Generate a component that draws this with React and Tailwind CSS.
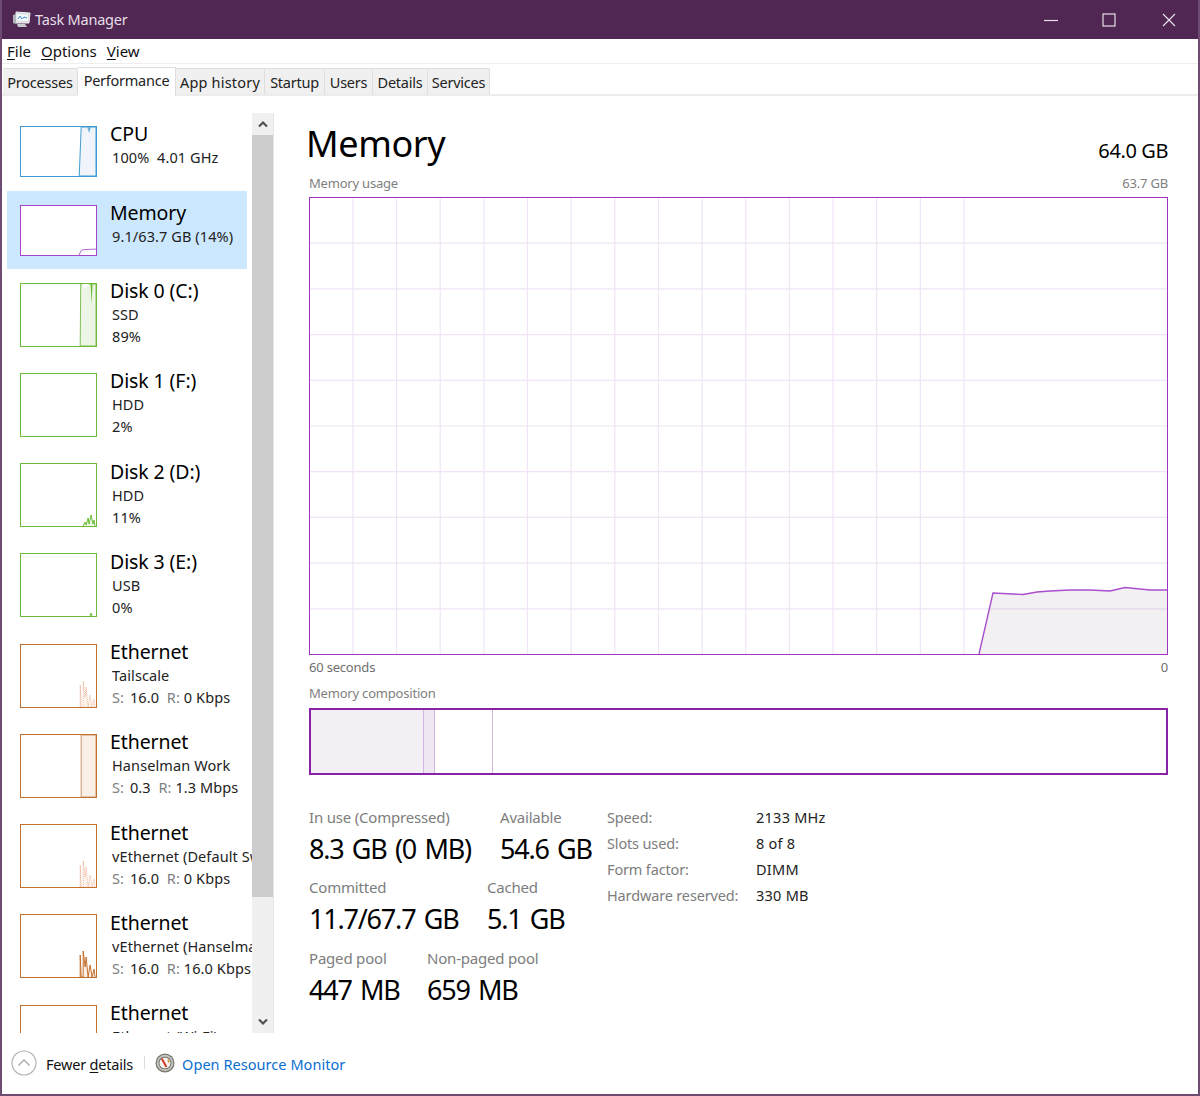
import React from 'react'

const theme = {
  cpu: { border: 'border-[#3f9bd1]', line: '#3f9bd1', fill: '#eff5fb' },
  mem: { border: 'border-[#a544c6]', line: '#b06ad0', fill: '#ffffff' },
  disk: { border: 'border-[#6dbb35]', line: '#6dbb35', fill: '#edf5e7' },
  net: { border: 'border-[#c4702d]', line: '#c4702d', fill: '#fbf0e8' },
}

const tabs = [
  { name: 'Processes', w: 'w-[75px]', track: 'tracking-[-0.2px]' },
  { name: 'Performance', w: 'w-[98px]', track: 'tracking-[-0.25px]', active: true },
  { name: 'App history', w: 'w-[89px]', track: 'tracking-[0.2px]' },
  { name: 'Startup', w: 'w-[60px]', track: 'tracking-[-0.25px]' },
  { name: 'Users', w: 'w-[48px]', track: 'tracking-[-0.25px]' },
  { name: 'Details', w: 'w-[55px]', track: 'tracking-[-0.25px]' },
  { name: 'Services', w: 'w-[62px]', track: 'tracking-[-0.25px]' },
]

const spikes = 'M60 62 L60 40 L61 62 L63 62 L63 36 L65 52 L66 42 L68 62 L70 50 L72 62 L74 54 L75 62'

const items = [
  {
    title: 'CPU', lines: [<span>100%&nbsp; 4.01 GHz</span>], kind: 'cpu', h: 'h-[79px]', gh: 'h-[51px]', vb: 50,
    draw: (t) => (
      <>
        <path d="M59 50 L61 0 L76 0 L76 50 Z" fill={t.fill} stroke={t.line} strokeWidth="1" />
        <path d="M67 0 L69 6 L71 0 Z" fill="#6fb2dc" />
      </>
    ),
  },
  {
    title: 'Memory', lines: [<span>9.1/63.7 GB (14%)</span>], kind: 'mem', h: 'h-[78px]', gh: 'h-[51px]', vb: 50, selected: true,
    draw: (t) => <path d="M59 50 L60.5 46 L63 44.5 L76 44" fill="#fbf8fc" stroke={t.line} strokeWidth="1" />,
  },
  {
    title: 'Disk 0 (C:)', lines: [<span>SSD</span>, <span>89%</span>], kind: 'disk',
    draw: (t) => (
      <>
        <path d="M60 62 L60.5 0 L76 0 L76 62 Z" fill={t.fill} stroke="#7fbf55" strokeWidth="1" />
        <path d="M62 0 L65 5 L69 0 Z" fill="#ffffff" />
        <path d="M70.5 0 L71.5 20 L72.5 0 Z" fill="#6dbb35" />
      </>
    ),
  },
  { title: 'Disk 1 (F:)', lines: [<span>HDD</span>, <span>2%</span>], kind: 'disk', draw: () => null },
  {
    title: 'Disk 2 (D:)', lines: [<span>HDD</span>, <span>11%</span>], kind: 'disk',
    draw: (t) => <path d="M63 62 L65 58 L66 61 L68 54 L69 60 L71 51 L73 60 L74 56 L75 62" fill={t.fill} stroke={t.line} strokeWidth="1" />,
  },
  {
    title: 'Disk 3 (E:)', lines: [<span>USB</span>, <span>0%</span>], kind: 'disk',
    draw: (t) => <path d="M70 62 L71 59 L72 62" fill={t.fill} stroke={t.line} strokeWidth="1" />,
  },
  {
    title: 'Ethernet', lines: [<span>Tailscale</span>, <Rate s="16.0" r="0 Kbps" />], kind: 'net',
    draw: () => <path d={spikes} fill="#fdf4ee" stroke="#eeb69c" strokeWidth="1" strokeDasharray="1 1" />,
  },
  {
    title: 'Ethernet', lines: [<span>Hanselman Work</span>, <Rate s="0.3" r="1.3 Mbps" />], kind: 'net',
    draw: (t) => <path d="M61 62 L61 0 L76 0 L76 62 Z" fill={t.fill} stroke="#cf9468" strokeWidth="1" />,
  },
  {
    title: 'Ethernet', lines: [<span>vEthernet (Default Switch)</span>, <Rate s="16.0" r="0 Kbps" />], kind: 'net',
    draw: () => <path d={spikes} fill="#fdf4ee" stroke="#eeb69c" strokeWidth="1" strokeDasharray="1 1" />,
  },
  {
    title: 'Ethernet', lines: [<span>vEthernet (Hanselman)</span>, <Rate s="16.0" r="16.0 Kbps" />], kind: 'net',
    draw: (t) => <path d={spikes} fill={t.fill} stroke={t.line} strokeWidth="1" />,
  },
  {
    title: 'Ethernet', lines: [<span>Ethernet (Wi-Fi)</span>, <Rate s="16.0" r="0 Kbps" />], kind: 'net', draw: () => null,
  },
]

function Rate({ s, r }) {
  return (
    <span>
      <span className="text-[#808080]">S:</span> <span className="ml-[2px]">{s}</span>&nbsp; <span className="text-[#808080]">R:</span> {r}
    </span>
  )
}

const Under = ({ children }) => <span className="underline underline-offset-2 decoration-1">{children}</span>

function SideItem({ item }) {
  const t = theme[item.kind]
  const vbH = item.vb || 62
  return (
    <div className={`flex pl-[13px] pt-[13.6px] w-[240px] shrink-0 ${item.h || 'h-[90.25px]'} ${item.selected ? 'bg-[#cce8ff]' : ''}`}>
      <div className={`w-[77px] shrink-0 border bg-white ${t.border} ${item.gh || 'h-[64px]'}`}>
        <svg viewBox={`0 0 76 ${vbH}`} preserveAspectRatio="none" className="block w-full h-full">
          {item.draw(t)}
        </svg>
      </div>
      <div className="ml-[13px] -mt-[3.6px] whitespace-nowrap">
        <div className="text-[19.5px] leading-[24px] tracking-[-0.1px] text-black">{item.title}</div>
        <div className="pl-[2px] text-[14.5px] leading-[22px] tracking-[0.1px] text-[#222]">
          {item.lines.map((l, i) => <div key={i}>{l}</div>)}
        </div>
      </div>
    </div>
  )
}

function UsageChart() {
  const hLines = Array.from({ length: 9 }, (_, i) => 45.7 * (i + 1) - 0.5)
  const vLines = Array.from({ length: 19 }, (_, i) => 654 - i * 43.65)
  return (
    <div className="h-[458px] border border-[#9d35c2] bg-white">
      <svg viewBox="0 0 857 456" className="block w-full h-full">
        {hLines.map((y) => <line key={y} x1="0" x2="857" y1={y} y2={y} stroke="#f0e4f6" strokeWidth="1.2" />)}
        {vLines.map((x) => <line key={x} x1={x} x2={x} y1="0" y2="456" stroke="#f0e4f6" strokeWidth="1.2" />)}
        <path
          d="M669 456 L683 395 L713 396.5 L727 394 L740 393 L760 392 L780 392 L800 393 L815 389.5 L830 391 L840 392 L857 392 L857 456 Z"
          fill="#4b2d5a"
          fillOpacity="0.07"
        />
        <path
          d="M669 456 L683 395 L713 396.5 L727 394 L740 393 L760 392 L780 392 L800 393 L815 389.5 L830 391 L840 392 L857 392"
          fill="none"
          stroke="#a94fcb"
          strokeWidth="1.4"
        />
      </svg>
    </div>
  )
}

function Stat({ label, value, gap }) {
  return (
    <div className={gap}>
      <div className="text-[15px] leading-[20px] tracking-[-0.2px] text-[#7d7d7d]">{label}</div>
      <div className="mt-[4px] text-[27px] leading-[36px] tracking-[-1.2px] [word-spacing:2.5px] text-black">{value}</div>
    </div>
  )
}

function TaskIcon() {
  return (
    <svg width="19" height="17" viewBox="0 0 19 17" className="shrink-0">
      <path d="M4 1 L18 2 L17 12 L4 12 Z" fill="#d8dce0" stroke="#eef0f2" />
      <path d="M5 3 L16 3.5 L16 10 L5 10 Z" fill="#f4f7fa" />
      <path d="M6 8 L8 5 L10 8 L12 6 L15 7" fill="none" stroke="#3f8fd0" strokeWidth="1" />
      <path d="M1 4 L4 3 L4 13 L1 12 Z" fill="#aeb4ba" />
      <path d="M5 13 L13 13 L15 16 L6 16 Z" fill="#c8ccd0" />
    </svg>
  )
}

function MonitorIcon() {
  return (
    <svg width="20" height="20" viewBox="0 0 20 20" className="shrink-0">
      <circle cx="10" cy="10" r="9.5" fill="#77776f" />
      <circle cx="10" cy="10" r="8.3" fill="#c4c4be" />
      <circle cx="10" cy="10" r="6.3" fill="#55534e" />
      <circle cx="10" cy="10" r="5.6" fill="#f6f3ec" />
      <path d="M6.8 5.8 L11.5 14" stroke="#d23b2e" strokeWidth="2" />
      <path d="M13 6.5 L14 9.5" stroke="#d98a2b" strokeWidth="1.4" />
    </svg>
  )
}

export default function App() {
  return (
    <div className="w-[1200px] h-[1096px] overflow-hidden bg-white border-2 border-t-0 border-[#6e4c72] font-['Noto_Sans','Open_Sans',sans-serif] flex flex-col">
      <div className="h-[39px] shrink-0 bg-[#4f2752] flex items-center pl-[10px] text-white">
        <TaskIcon />
        <span className="ml-[4px] text-[14.5px] tracking-[-0.2px] text-[#e6dfe8]">Task Manager</span>
        <div className="ml-auto flex items-center">
          <svg width="16" height="16" viewBox="0 0 16 16" className="mr-[43px] text-[#e8e0ea]"><path d="M1 8.5 H15" stroke="currentColor" strokeWidth="1.2" /></svg>
          <svg width="14" height="14" viewBox="0 0 14 14" className="mr-[46px] text-[#e8e0ea]"><rect x="1" y="1" width="12" height="12" fill="none" stroke="currentColor" strokeWidth="1.2" /></svg>
          <svg width="14" height="14" viewBox="0 0 14 14" className="mr-[22px] text-[#e8e0ea]"><path d="M1 1 L13 13 M13 1 L1 13" stroke="currentColor" strokeWidth="1.2" /></svg>
        </div>
      </div>

      <div className="h-[25px] shrink-0 flex items-center gap-[10px] pl-[5px] border-b border-[#eeeeee] text-[15px] text-[#111]">
        <span><Under>F</Under>ile</span>
        <span><Under>O</Under>ptions</span>
        <span><Under>V</Under>iew</span>
      </div>

      <div className="h-[32px] shrink-0 flex items-end pl-[1px] border-b-2 border-[#ececec]">
        {tabs.map((tab) => (
          <div
            key={tab.name}
            className={`${tab.w} ${tab.track} flex justify-center border-r border-t border-[#dedede] text-[#222] text-[14.5px] ${tab.active ? 'h-[29px] bg-white pt-[2px] -mb-[2px] pb-[2px]' : 'h-[26px] bg-[#f0f0f0] items-center pt-[2px]'}`}
          >
            {tab.name}
          </div>
        ))}
      </div>

      <div className="flex flex-1 min-h-0">
        <div className="shrink-0 pt-[16px] pl-[5px] flex">
          <div className="w-[245px] h-[921px] overflow-hidden flex flex-col">
            {items.map((item, i) => <SideItem key={i} item={item} />)}
          </div>
          <div className="w-[22px] h-[920px] mt-px flex flex-col border-r border-[#e6e6e6] bg-[#f0f0f0]">
            <div className="h-[22px] flex items-center justify-center">
              <svg width="12" height="8" viewBox="0 0 12 8"><path d="M2 6.5 L6 2.5 L10 6.5" fill="none" stroke="#505050" strokeWidth="2.2" /></svg>
            </div>
            <div className="h-[762px] bg-[#cdcdcd]" />
            <div className="mt-auto h-[22px] flex items-center justify-center">
              <svg width="12" height="8" viewBox="0 0 12 8"><path d="M2 1.5 L6 5.5 L10 1.5" fill="none" stroke="#505050" strokeWidth="2.2" /></svg>
            </div>
          </div>
        </div>

        <div className="ml-[35px] w-[859px] shrink-0">
          <div className="flex justify-between h-[72px] pt-[20px]">
            <div className="text-[36px] leading-[56px] -ml-[3px] tracking-[-0.4px] text-black">Memory</div>
            <div className="text-[20px] leading-[28px] mt-[21px] tracking-[-0.4px] text-black">64.0 GB</div>
          </div>
          <div className="flex justify-between h-[29px] pt-[2px] items-center text-[13px] tracking-[-0.2px] text-[#808080]">
            <span>Memory usage</span>
            <span>63.7 GB</span>
          </div>
          <UsageChart />
          <div className="flex justify-between h-[25px] items-center text-[13px] tracking-[-0.2px] text-[#6f6f6f]">
            <span>60 seconds</span>
            <span>0</span>
          </div>
          <div className="h-[27px] flex items-center text-[13px] tracking-[-0.2px] text-[#808080]">Memory composition</div>
          <div className="h-[67px] border-2 border-[#8a22a8] flex mt-px">
            <div className="w-[112px] bg-[#f3f0f5]" />
            <div className="w-[12px] bg-[#efe8f3] border-x border-[#d3b6df]" />
            <div className="w-[58px] border-r border-[#d3b6df]" />
          </div>

          <div className="flex mt-[32px]">
            <div className="w-[298px]">
              <div className="flex">
                <Stat label="In use (Compressed)" value="8.3 GB (0 MB)" gap="w-[191px]" />
                <Stat label="Available" value="54.6 GB" />
              </div>
              <div className="flex mt-[10px]">
                <Stat label="Committed" value="11.7/67.7 GB" gap="w-[178px]" />
                <Stat label="Cached" value="5.1 GB" />
              </div>
              <div className="flex mt-[11px]">
                <Stat label="Paged pool" value="447 MB" gap="w-[118px]" />
                <Stat label="Non-paged pool" value="659 MB" />
              </div>
            </div>
            <div className="-mt-[3px] text-[14.5px] leading-[26px] text-[#222]">
              {[
                ['Speed:', '2133 MHz'],
                ['Slots used:', '8 of 8'],
                ['Form factor:', 'DIMM'],
                ['Hardware reserved:', '330 MB'],
              ].map(([k, v]) => (
                <div key={k} className="flex">
                  <span className="w-[149px] tracking-[-0.15px] text-[#7d7d7d]">{k}</span>
                  <span className="tracking-[0.25px]">{v}</span>
                </div>
              ))}
            </div>
          </div>
        </div>
      </div>

      <div className="h-[61px] shrink-0 flex items-center pl-[9px] text-[14.5px] tracking-[-0.2px]">
        <svg width="26" height="26" viewBox="0 0 26 26" className="shrink-0 -mt-[1px]">
          <circle cx="13" cy="13" r="12" fill="#fff" stroke="#b4b4b4" strokeWidth="1.2" />
          <path d="M7.5 15.5 L13 10 L18.5 15.5" fill="none" stroke="#a8a8a8" strokeWidth="1.3" />
        </svg>
        <span className="ml-[9px] pt-[3px] text-[#111]">Fewer <Under>d</Under>etails</span>
        <div className="ml-[11px] w-px h-[13px] bg-[#dcdcdc] -mt-[2px]" />
        <div className="ml-[10px] -mt-[2px]"><MonitorIcon /></div>
        <span className="ml-[7px] pt-[3px] tracking-[0.05px] text-[#0a6ed1]">Open Resource Monitor</span>
      </div>
    </div>
  )
}
